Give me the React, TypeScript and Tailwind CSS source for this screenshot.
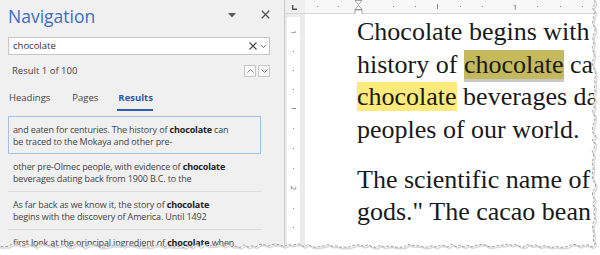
import React from 'react'

const results = [
  { before: 'and eaten for centuries. The history of ', after: ' can', second: 'be traced to the Mokaya and other pre-' },
  { before: 'other pre-Olmec people, with evidence of ', after: '', second: 'beverages dating back from 1900 B.C. to the' },
  { before: 'As far back as we know it, the story of ', after: '', second: 'begins with the discovery of America. Until 1492' },
  { before: 'first look at the principal ingredient of ', after: ' when', second: '' },
]

// pseudo random for the torn paper edge
const rnd = (i: number) => {
  const x = Math.sin(i * 12.9898 + 1.7) * 43758.5453
  return x - Math.floor(x)
}

function TornEdge() {
  const right: [number, number][] = []
  for (let y = 0; y <= 244; y += 4) right.push([592 + rnd(y) * 3.5, y])
  const bottom: [number, number][] = []
  for (let x = 592; x >= -4; x -= 4) bottom.push([x, 244 + rnd(x + 500) * 3.5])
  const pts = [...right, ...bottom]
  const line = pts.map((p, i) => `${i ? 'L' : 'M'}${p[0].toFixed(1)} ${p[1].toFixed(1)}`).join(' ')
  const fill = `${line} L0 255 L600 255 L600 0 Z`
  const shadow = pts.map((p, i) => `${i ? 'L' : 'M'}${(p[0] + 1.5).toFixed(1)} ${(p[1] + 1.5).toFixed(1)}`).join(' ')
  return (
    <svg className="absolute inset-0 pointer-events-none" width="600" height="255" viewBox="0 0 600 255">
      <path d={fill} fill="#ffffff" />
      <path d={shadow} fill="none" stroke="#d8d8d8" strokeWidth="1.5" />
      <path d={line} fill="none" stroke="#8c8c8c" strokeWidth="0.8" strokeDasharray="3 1.5" />
    </svg>
  )
}

function NavPanel() {
  return (
    <div className="w-[284px] h-full bg-[#f0f0f0] flex flex-col font-['Open_Sans',sans-serif] text-[#444] shrink-0">
      <div className="h-[40px] flex items-start pl-[8px] pr-[14px] pt-[4px]">
        <span className="text-[17.5px] leading-[24px] text-[#3b6ec2] flex-1">Navigation</span>
        <svg className="mt-[9px]" width="8" height="5" viewBox="0 0 8 5">
          <path d="M0 0 L8 0 L4 4.5 Z" fill="#5a5a5a" />
        </svg>
        <svg className="ml-[25px] mt-[6px]" width="9" height="9" viewBox="0 0 9 9">
          <path d="M0.8 0.8 L8.2 8.2 M8.2 0.8 L0.8 8.2" stroke="#555" strokeWidth="1.3" />
        </svg>
      </div>

      <div className="ml-[8px] w-[262px] h-[20px] bg-white border border-[#c6c6c6] flex items-center pl-[4px] pr-[3px]">
        <span className="text-[9.5px] text-[#333] flex-1">chocolate</span>
        <svg width="8" height="8" viewBox="0 0 8 8">
          <path d="M0.5 0.5 L7.5 7.5 M7.5 0.5 L0.5 7.5" stroke="#444" strokeWidth="1.1" />
        </svg>
        <svg className="ml-[4px]" width="5" height="3" viewBox="0 0 5 3">
          <path d="M0.3 0.3 L2.5 2.5 L4.7 0.3" stroke="#555" strokeWidth="0.9" fill="none" />
        </svg>
      </div>

      <div className="mt-[9px] h-[13px] flex items-center pl-[12px] pr-[14px]">
        <span className="text-[9.5px] flex-1">Result 1 of 100</span>
        <div className="w-[12px] h-[12px] border border-[#c8c8c8] bg-[#f7f7f7] flex items-center justify-center">
          <svg width="7" height="4" viewBox="0 0 7 4">
            <path d="M0.5 3.5 L3.5 0.5 L6.5 3.5" stroke="#777" strokeWidth="0.9" fill="none" />
          </svg>
        </div>
        <div className="ml-[2px] w-[12px] h-[12px] border border-[#c8c8c8] bg-[#f7f7f7] flex items-center justify-center">
          <svg width="7" height="4" viewBox="0 0 7 4">
            <path d="M0.5 0.5 L3.5 3.5 L6.5 0.5" stroke="#777" strokeWidth="0.9" fill="none" />
          </svg>
        </div>
      </div>

      <div className="mt-[13px] h-[23px] flex items-start text-[9.5px] leading-[16px] pl-[9px]">
        <span>Headings</span>
        <span className="ml-[22px]">Pages</span>
        <div className="ml-[20px] flex flex-col items-start">
          <span className="font-bold text-[#2b5aa8]">Results</span>
          <div className="mt-[3px] w-[36px] h-[2px] bg-[#2f5fb3] -ml-[1px]" />
        </div>
      </div>

      <div className="mt-[4px] ml-[8px] w-[253px] flex flex-col text-[9px] leading-[12.5px] tracking-[-0.15px]">
        {results.map((r, i) => (
          <div
            key={i}
            className={
              i === 0
                ? 'border border-[#a7c0e6] pl-[4px] pt-[7px] pb-[4px]'
                : 'border-b border-[#dcdcdc] pl-[5px] pt-[7px] pb-[5px]'
            }
          >
            <div className="whitespace-nowrap">
              {r.before}
              <b className="text-[#222]">chocolate</b>
              {r.after}
            </div>
            {r.second && <div className="whitespace-nowrap">{r.second}</div>}
          </div>
        ))}
      </div>
    </div>
  )
}

function HRuler() {
  const dots = [317, 338, 393, 415, 460, 482, 537, 560, 582]
  return (
    <svg width="295" height="14" viewBox="305 0 295 14" className="block">
      <rect x="305" y="0" width="295" height="13" fill="#f8f8f8" />
      <rect x="305" y="13" width="295" height="1" fill="#d6d6d6" />
      {dots.map((x) => (
        <rect key={x} x={x} y="6" width="1" height="1" fill="#8a8a8a" />
      ))}
      <rect x="437" y="4" width="1" height="5" fill="#8a8a8a" />
      <text x="515" y="10" fontSize="8" fill="#666" textAnchor="middle" fontFamily="Open Sans, sans-serif">1</text>
      <path d="M355 0.5 L362 0.5 L358.5 4.5 Z" fill="#fff" stroke="#8a8a8a" strokeWidth="0.8" />
      <path d="M358.5 5.5 L362 9.5 L355 9.5 Z" fill="#fff" stroke="#8a8a8a" strokeWidth="0.8" />
      <rect x="355" y="10" width="7" height="5" fill="#fff" stroke="#8a8a8a" strokeWidth="0.8" />
    </svg>
  )
}

function VRuler() {
  const dots = [51, 70, 89, 128, 148, 168, 208, 227]
  return (
    <svg width="16" height="240" viewBox="285 14 16 240" className="block">
      <rect x="287" y="17" width="13" height="240" fill="#ffffff" />
      {dots.map((y) => (
        <rect key={y} x="293" y={y} width="1" height="1" fill="#8a8a8a" />
      ))}
      <rect x="292" y="108" width="4" height="1" fill="#8a8a8a" />
      <text x="0" y="0" fontSize="7" fill="#666" fontFamily="Open Sans, sans-serif" textAnchor="middle" transform="translate(291 32) rotate(90)">1</text>
      <text x="0" y="0" fontSize="7" fill="#666" fontFamily="Open Sans, sans-serif" textAnchor="middle" transform="translate(291 188) rotate(90)">2</text>
    </svg>
  )
}

export default function App() {
  return (
    <div className="relative w-[600px] h-[255px] overflow-hidden bg-white flex">
      <NavPanel />
      <div className="w-px h-full bg-[#c9c9c9] shrink-0" />
      <div className="flex-1 flex flex-col">
        <div className="flex h-[14px]">
          <div className="w-[20px] h-full bg-[#efefef] border-b border-[#d6d6d6] relative">
            <svg className="absolute left-[7px] top-[5px]" width="5" height="5" viewBox="0 0 5 5">
              <path d="M0.7 0 L0.7 4.3 L5 4.3" stroke="#555" strokeWidth="1.4" fill="none" />
            </svg>
          </div>
          <HRuler />
        </div>
        <div className="flex flex-1">
          <div className="w-[20px] bg-[#ebebeb] shrink-0 flex">
            <VRuler />
          </div>
          <div className="flex-1 bg-white overflow-hidden pl-[52px] pt-[2px] font-['Liberation_Serif',serif] text-[26px] leading-[32.5px] text-[#1a1a1a] whitespace-nowrap">
            <p>Chocolate begins with</p>
            <p>
              history of <span className="bg-[#c4b95d] shadow-[0_3px_0_#c8c8c8]">chocolate</span> ca
            </p>
            <p>
              <span className="bg-[#fdea7b]">chocolate</span> beverages da
            </p>
            <p>peoples of our world.</p>
            <p className="mt-[17.5px]">The scientific name of</p>
            <p>gods." The cacao bean</p>
          </div>
        </div>
      </div>
      <TornEdge />
    </div>
  )
}
